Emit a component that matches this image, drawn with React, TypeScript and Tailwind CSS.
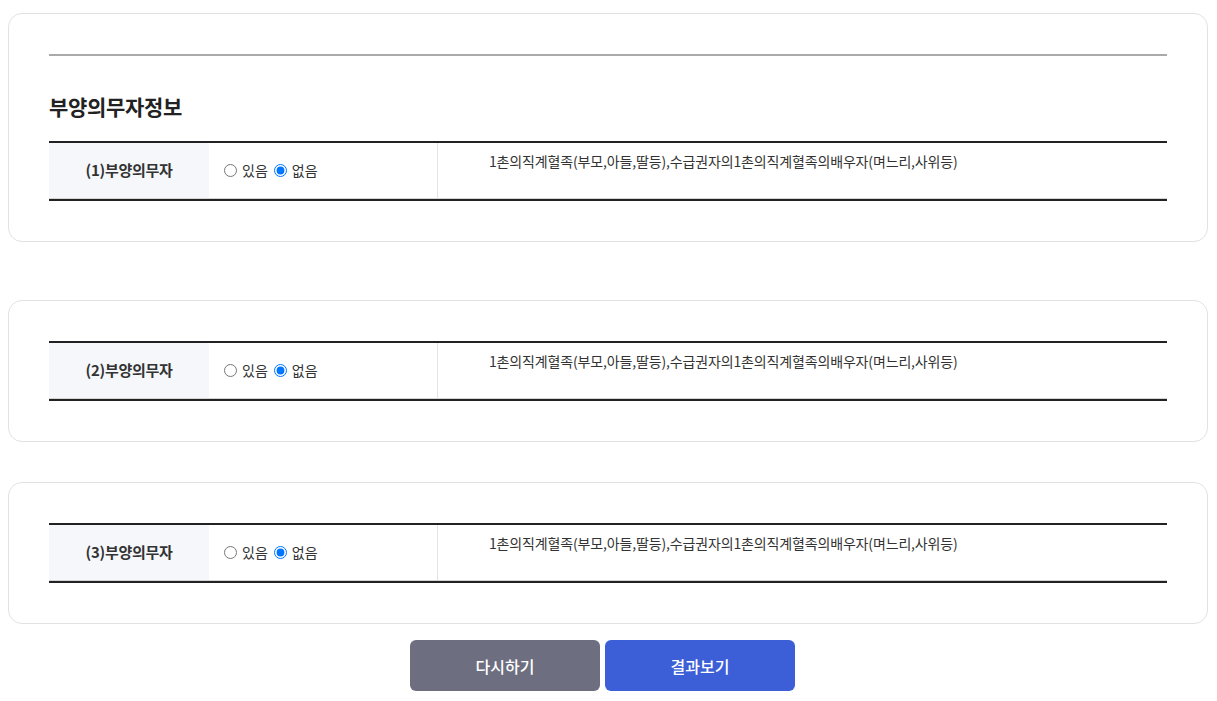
const FONT = { fontFamily: '"Noto Sans CJK KR", "Noto Sans", sans-serif' };

const DESC = "1촌의직계혈족(부모,아들,딸등),수급권자의1촌의직계혈족의배우자(며느리,사위등)";

function DependentRow({ no }: { no: number }) {
  return (
    <div className="border-t-2 border-b-2 border-[#222]">
      <div className="flex h-[56px] border-b border-[#d4d4d4]">
        <div className="w-[160px] shrink-0 bg-[#f5f7fb] flex items-center justify-center text-[15px] font-bold text-[#333] tracking-[-0.3px]">
          ({no})부양의무자
        </div>
        <div className="w-[229px] shrink-0 flex items-center pl-[15px] text-[14px] text-[#333] tracking-[0px] border-r border-[#e3e3e3]">
          <input type="radio" name={`dep${no}`} className="m-0 w-[13px] h-[13px]" />
          <span className="ml-[5px]">있음</span>
          <input type="radio" name={`dep${no}`} defaultChecked className="m-0 ml-[6px] w-[13px] h-[13px]" />
          <span className="ml-[5px]">없음</span>
        </div>
        <div className="flex-1 pl-[51px] pt-[7px] text-[14px] leading-[22px] text-[#333] tracking-[-0.15px]">
          {DESC}
        </div>
      </div>
    </div>
  );
}

function Card({ children, className = "" }: { children: React.ReactNode; className?: string }) {
  return (
    <div className={`border border-[#e2e2e2] rounded-[14px] bg-white px-[40px] py-[40px] ${className}`}>
      {children}
    </div>
  );
}

export default function App() {
  return (
    <div className="min-h-[701px] bg-white pl-[8px] pr-[9px] pt-[13px]" style={FONT}>
      <Card>
        <div className="h-[2px] bg-[#aaa]" />
        <h2 className="mt-[35px] mb-[20px] text-[21px] leading-[30px] font-bold text-[#222] tracking-[-0.3px]">
          부양의무자정보
        </h2>
        <DependentRow no={1} />
      </Card>

      <Card className="mt-[58px]">
        <DependentRow no={2} />
      </Card>

      <Card className="mt-[40px]">
        <DependentRow no={3} />
      </Card>

      <div className="flex justify-center gap-[5px] mt-[16px] pr-[11px]">
        <button className="w-[190px] h-[51px] rounded-[6px] bg-[#6d6f80] text-white text-[16px] font-medium tracking-[0px]">
          다시하기
        </button>
        <button className="w-[190px] h-[51px] rounded-[6px] bg-[#3c5fd7] text-white text-[16px] font-medium tracking-[0px]">
          결과보기
        </button>
      </div>
    </div>
  );
}
